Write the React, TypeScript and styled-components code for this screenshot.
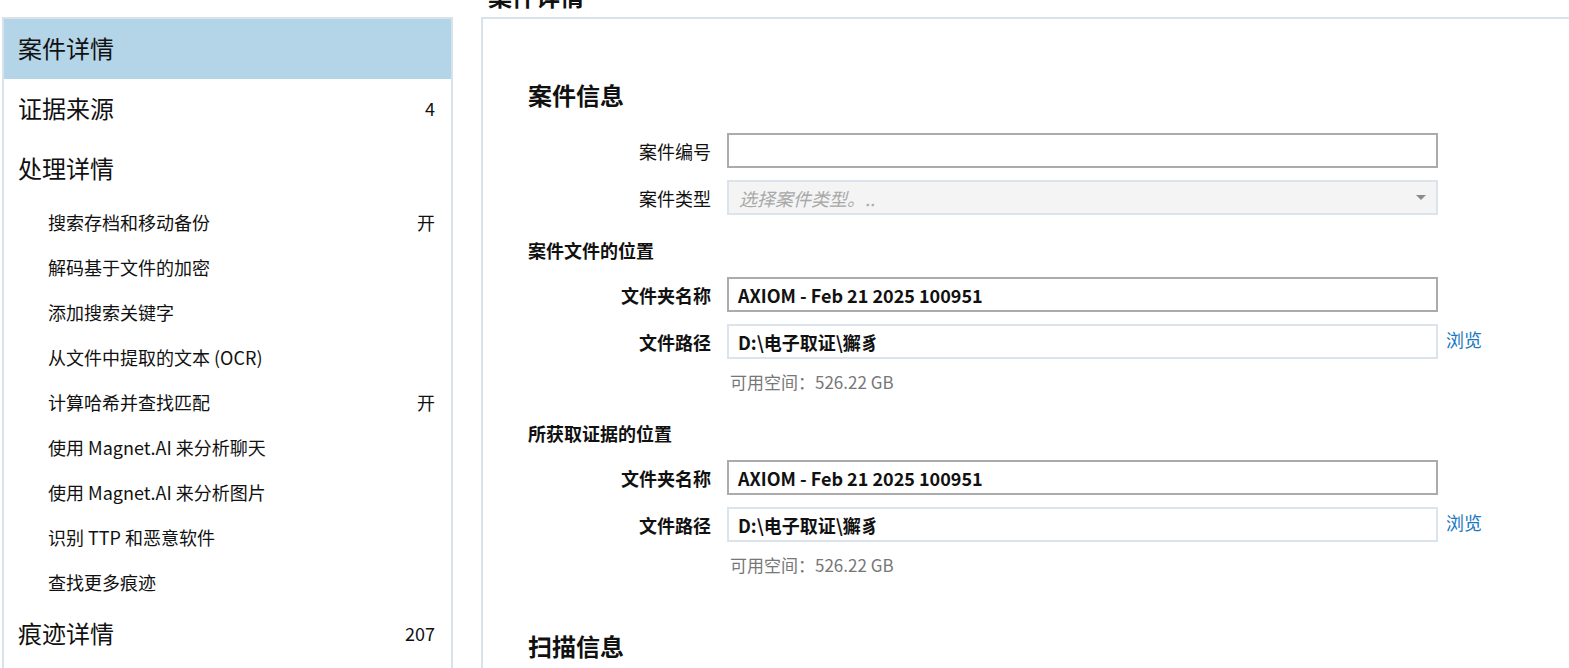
import styled, { createGlobalStyle } from 'styled-components';

const GlobalStyle = createGlobalStyle`
    html, body {
        margin: 0;
        padding: 0;
        background: #ffffff;
        overflow: hidden;
    }
    body {
        font-family: "Noto Sans CJK SC", "Noto Sans", sans-serif;
        color: #111111;
    }
`;

const subItems: { label: string; value?: string }[] = [
    { label: '搜索存档和移动备份', value: '开' },
    { label: '解码基于文件的加密' },
    { label: '添加搜索关键字' },
    { label: '从文件中提取的文本 (OCR)' },
    { label: '计算哈希并查找匹配', value: '开' },
    { label: '使用 Magnet.AI 来分析聊天' },
    { label: '使用 Magnet.AI 来分析图片' },
    { label: '识别 TTP 和恶意软件' },
    { label: '查找更多痕迹' },
];

function LocationBlock({ title, first }: { title: string; first?: boolean }) {
    return (
        <>
            <SubHeading $gap={first ? 23 : 28}>{title}</SubHeading>
            <FormGrid>
                <FieldLabel $bold>文件夹名称</FieldLabel>
                <TextBox $strong>
                    <Value>AXIOM - Feb 21 2025 100951</Value>
                </TextBox>
                <span />
                <FieldLabel $bold>文件路径</FieldLabel>
                <TextBox>
                    <Value>D:\电子取证\獬豸</Value>
                </TextBox>
                <BrowseLink>浏览</BrowseLink>
                <span />
                <FreeSpace>可用空间：526.22 GB</FreeSpace>
            </FormGrid>
        </>
    );
}

export default function App() {
    return (
        <Page>
            <GlobalStyle />
            <Sidebar>
                <NavItem $active>
                    <NavText>案件详情</NavText>
                </NavItem>
                <NavItem>
                    <NavText>证据来源</NavText>
                    <Count>4</Count>
                </NavItem>
                <NavItem>
                    <NavText>处理详情</NavText>
                </NavItem>
                {subItems.map((s) => (
                    <SubItem key={s.label}>
                        <span>{s.label}</span>
                        {s.value && <Count>{s.value}</Count>}
                    </SubItem>
                ))}
                <NavItem>
                    <NavText>痕迹详情</NavText>
                    <Count>207</Count>
                </NavItem>
            </Sidebar>

            <Main>
                <PageTitle>案件详情</PageTitle>
                <Panel>
                    <SectionTitle>案件信息</SectionTitle>
                    <FormGrid>
                        <FieldLabel>案件编号</FieldLabel>
                        <TextBox $strong />
                        <span />
                        <FieldLabel>案件类型</FieldLabel>
                        <SelectBox>
                            <Placeholder>选择案件类型。..</Placeholder>
                            <Caret />
                        </SelectBox>
                    </FormGrid>

                    <LocationBlock title="案件文件的位置" first />
                    <LocationBlock title="所获取证据的位置" />

                    <ScanTitle>扫描信息</ScanTitle>
                </Panel>
            </Main>
        </Page>
    );
}

const Page = styled.div`
    display: flex;
    align-items: flex-start;
    width: 1640px;
    height: 668px;
    padding-left: 2px;
    gap: 28px;
`;

const Sidebar = styled.nav`
    width: 447px;
    height: 700px;
    margin-top: 17px;
    border: 2px solid #d8e2ea;
    border-bottom: none;
    display: flex;
    flex-direction: column;
`;

const NavItem = styled.div<{ $active?: boolean }>`
    height: 60px;
    flex-shrink: 0;
    display: flex;
    align-items: center;
    justify-content: space-between;
    padding: 0 16px 2px 14px;
    box-sizing: border-box;
    background: ${(p) => (p.$active ? '#b4d4e8' : 'transparent')};
`;

const NavText = styled.span`
    font-size: 24px;
    line-height: 32px;
`;

const SubItem = styled.div`
    height: 45px;
    flex-shrink: 0;
    display: flex;
    align-items: center;
    justify-content: space-between;
    padding: 0 16px 0 44px;
    font-size: 18px;
    line-height: 24px;
`;

const Count = styled.span`
    font-size: 18px;
    line-height: 24px;
`;

const Main = styled.main`
    flex: 1;
    display: flex;
    flex-direction: column;
`;

const PageTitle = styled.h1`
    margin: -20px 0 5px;
    padding-left: 7px;
    font-size: 24px;
    line-height: 32px;
    font-weight: 700;
`;

const Panel = styled.section`
    height: 700px;
    border: 2px solid #d8e2ea;
    border-right: none;
    border-bottom: none;
    padding: 61px 0 0 45px;
    display: flex;
    flex-direction: column;
`;

const SectionTitle = styled.h2`
    margin: 0 0 23px;
    font-size: 24px;
    line-height: 30px;
    font-weight: 700;
`;

const ScanTitle = styled(SectionTitle)`
    margin-top: 55px;
`;

const SubHeading = styled.h3<{ $gap: number }>`
    margin: ${(p) => p.$gap}px 0 15px;
    font-size: 18px;
    line-height: 24px;
    font-weight: 700;
`;

const FormGrid = styled.div`
    display: grid;
    grid-template-columns: 183px 711px auto;
    column-gap: 16px;
    row-gap: 12px;
    align-items: center;
    justify-content: start;
`;

const FieldLabel = styled.label<{ $bold?: boolean }>`
    text-align: right;
    font-size: 18px;
    line-height: 24px;
    font-weight: ${(p) => (p.$bold ? 700 : 400)};
`;

const TextBox = styled.div<{ $strong?: boolean }>`
    box-sizing: border-box;
    height: 35px;
    display: flex;
    align-items: center;
    padding: 0 9px;
    background: #ffffff;
    border: ${(p) => (p.$strong ? '2px solid #ababab' : '2px solid #dbe4ec')};
`;

const Value = styled.span`
    font-size: 18px;
    line-height: 24px;
    font-weight: 700;
`;

const SelectBox = styled.div`
    box-sizing: border-box;
    height: 35px;
    display: flex;
    align-items: center;
    justify-content: space-between;
    padding: 0 10px 0 10px;
    background: #f4f4f4;
    border: 2px solid #dbe4ec;
`;

const Placeholder = styled.span`
    font-size: 18px;
    line-height: 24px;
    font-style: italic;
    color: #a8a8a8;
`;

const Caret = styled.span`
    width: 0;
    height: 0;
    border-left: 5px solid transparent;
    border-right: 5px solid transparent;
    border-top: 5px solid #8a8a8a;
`;

const BrowseLink = styled.a`
    margin: -5px 0 0 -8px;
    font-size: 18px;
    line-height: 24px;
    color: #1a78c2;
    cursor: pointer;
`;

const FreeSpace = styled.span`
    padding-left: 3px;
    font-size: 17px;
    line-height: 22px;
    color: #777777;
`;
